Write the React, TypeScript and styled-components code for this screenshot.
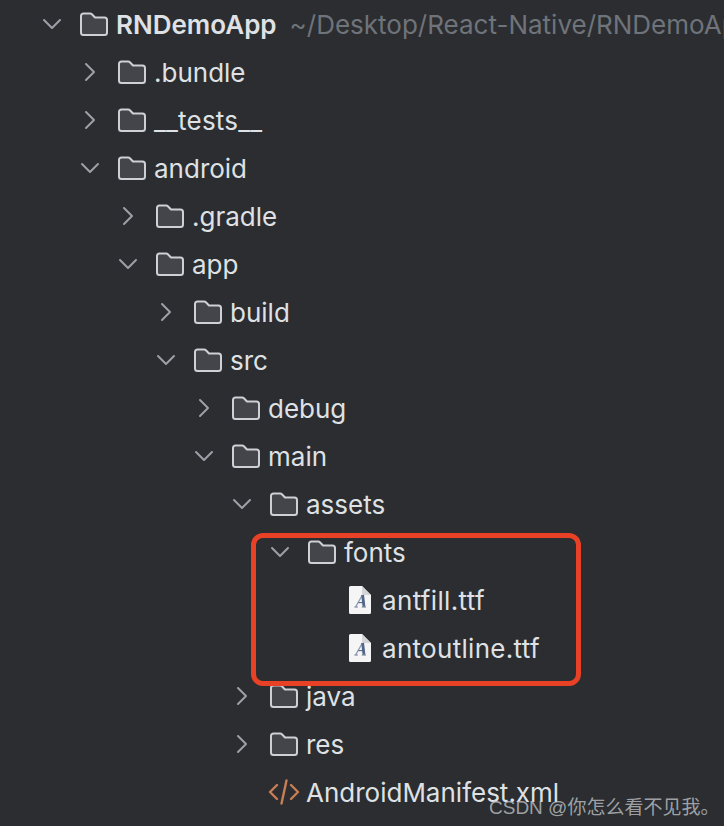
import React from "react";
import styled, { createGlobalStyle } from "styled-components";

const Global = createGlobalStyle`
  html, body { margin: 0; padding: 0; background: #2b2d30; }
  body { width: 724px; height: 826px; overflow: hidden; font-family: Inter, "Liberation Sans", sans-serif; }
`;

const Tree = styled.div`
  position: relative;
  width: 724px;
  height: 826px;
  overflow: hidden;
  background: #2b2d30;
  color: #dfe1e5;
`;

const Row = styled.div<{ $level: number }>`
  display: flex;
  align-items: center;
  height: 48px;
  padding-left: ${(p) => 40 + p.$level * 38}px;
  white-space: nowrap;
`;

const ChevronSlot = styled.span`
  flex: none;
  display: flex;
  width: 40px;
  height: 24px;
`;

const IconSlot = styled.span`
  flex: none;
  display: flex;
  align-items: center;
  justify-content: center;
  width: 28px;
  height: 28px;
  margin-right: 8px;
  svg { flex: none; }
`;

const Name = styled.span<{ $bold?: boolean; $spread?: number }>`
  font-size: 26px;
  line-height: 32px;
  font-weight: ${(p) => (p.$bold ? 600 : 400)};
  letter-spacing: ${(p) => p.$spread ?? 0}px;
  color: #dfe1e5;
  position: relative;
  top: 1px;
`;

const Path = styled.span`
  margin-left: 13px;
  font-size: 26px;
  line-height: 32px;
  color: #6f737a;
  position: relative;
  top: 1px;
`;

const Highlight = styled.div`
  position: absolute;
  left: 251px;
  top: 533px;
  width: 330px;
  height: 153px;
  box-sizing: border-box;
  border: 5px solid #e94125;
  border-radius: 12px;
`;

const Watermark = styled.div`
  position: absolute;
  left: 489px;
  top: 794px;
  font-family: "Liberation Sans", "Noto Sans CJK SC", sans-serif;
  font-size: 19px;
  line-height: 28px;
  color: rgba(190, 192, 196, 0.8);
  white-space: nowrap;
`;

const Chevron = ({ open }: { open: boolean }) => (
  <svg width="24" height="24" viewBox="0 0 24 24" fill="none" stroke="#9da0a8" strokeWidth="2" strokeLinecap="round" strokeLinejoin="round">
    {open ? <path d="M4 8 L12 16 L20 8" /> : <path d="M8 4 L16 12 L8 20" />}
  </svg>
);

const Folder = () => (
  <svg width="28" height="24" viewBox="0 0 28 24" fill="#43454a" stroke="#ced0d6" strokeWidth="2" strokeLinejoin="round">
    <path d="M1 4.2 A2.5 2.5 0 0 1 3.5 1.5 H10.2 A2.5 2.5 0 0 1 11.9 2.2 L15 5.5 H24.5 A2.5 2.5 0 0 1 27 8 V20.5 A2.5 2.5 0 0 1 24.5 23 H3.5 A2.5 2.5 0 0 1 1 20.5 Z" />
  </svg>
);

const FontFile = () => (
  <svg width="22" height="28" viewBox="0 0 22 28">
    <path d="M1.5 0 H13 L22 9 V26.5 A1.5 1.5 0 0 1 20.5 28 H1.5 A1.5 1.5 0 0 1 0 26.5 V1.5 A1.5 1.5 0 0 1 1.5 0 Z" fill="#f5f5f6" />
    <path d="M13 0 L22 9 H14.5 A1.5 1.5 0 0 1 13 7.5 Z" fill="#d4d5d8" />
    <g fill="none" stroke="#52658a" strokeLinecap="butt">
      <path d="M6.8 20.6 L13.4 9" strokeWidth="1.2" stroke="#8a98b2" />
      <path d="M13.6 9 L15 20.6" strokeWidth="2.8" />
      <path d="M9.4 16.6 H14.6" strokeWidth="1.1" />
      <path d="M5.4 21 H8.8 M12.8 21 H17" strokeWidth="0.9" />
    </g>
  </svg>
);

const XmlIcon = () => (
  <svg width="32" height="26" viewBox="0 0 32 26" fill="none" stroke="#c77d55" strokeWidth="2.4" strokeLinecap="round" strokeLinejoin="round">
    <path d="M9 6 L2 13 L9 20" />
    <path d="M23 6 L30 13 L23 20" />
    <path d="M18.5 1.5 L13.5 24.5" />
  </svg>
);

type Item = { level: number; name: string; state?: "open" | "closed"; icon?: "folder" | "font" | "xml"; bold?: boolean; path?: string; spread?: number };

const items: Item[] = [
  { level: 0, name: "RNDemoApp", state: "open", bold: true, path: "~/Desktop/React-Native/RNDemoApp" },
  { level: 1, name: ".bundle", state: "closed" },
  { level: 1, name: "__tests__", state: "closed", spread: 0.2 },
  { level: 1, name: "android", state: "open" },
  { level: 2, name: ".gradle", state: "closed" },
  { level: 2, name: "app", state: "open" },
  { level: 3, name: "build", state: "closed" },
  { level: 3, name: "src", state: "open" },
  { level: 4, name: "debug", state: "closed" },
  { level: 4, name: "main", state: "open" },
  { level: 5, name: "assets", state: "open" },
  { level: 6, name: "fonts", state: "open" },
  { level: 7, name: "antfill.ttf", icon: "font", spread: 0.34 },
  { level: 7, name: "antoutline.ttf", icon: "font", spread: 0.3 },
  { level: 5, name: "java", state: "closed" },
  { level: 5, name: "res", state: "closed" },
  { level: 5, name: "AndroidManifest.xml", icon: "xml" },
];

export default function App() {
  return (
    <Tree>
      <Global />
      {items.map((it) => (
        <Row key={it.name} $level={it.level}>
          <ChevronSlot>{it.state ? <Chevron open={it.state === "open"} /> : null}</ChevronSlot>
          <IconSlot>
            {it.icon === "font" ? <FontFile /> : it.icon === "xml" ? <XmlIcon /> : <Folder />}
          </IconSlot>
          <Name $bold={it.bold} $spread={it.spread}>{it.name}</Name>
          {it.path ? <Path>{it.path}</Path> : null}
        </Row>
      ))}
      <Highlight />
      <Watermark>CSDN @你怎么看不见我。</Watermark>
    </Tree>
  );
}
